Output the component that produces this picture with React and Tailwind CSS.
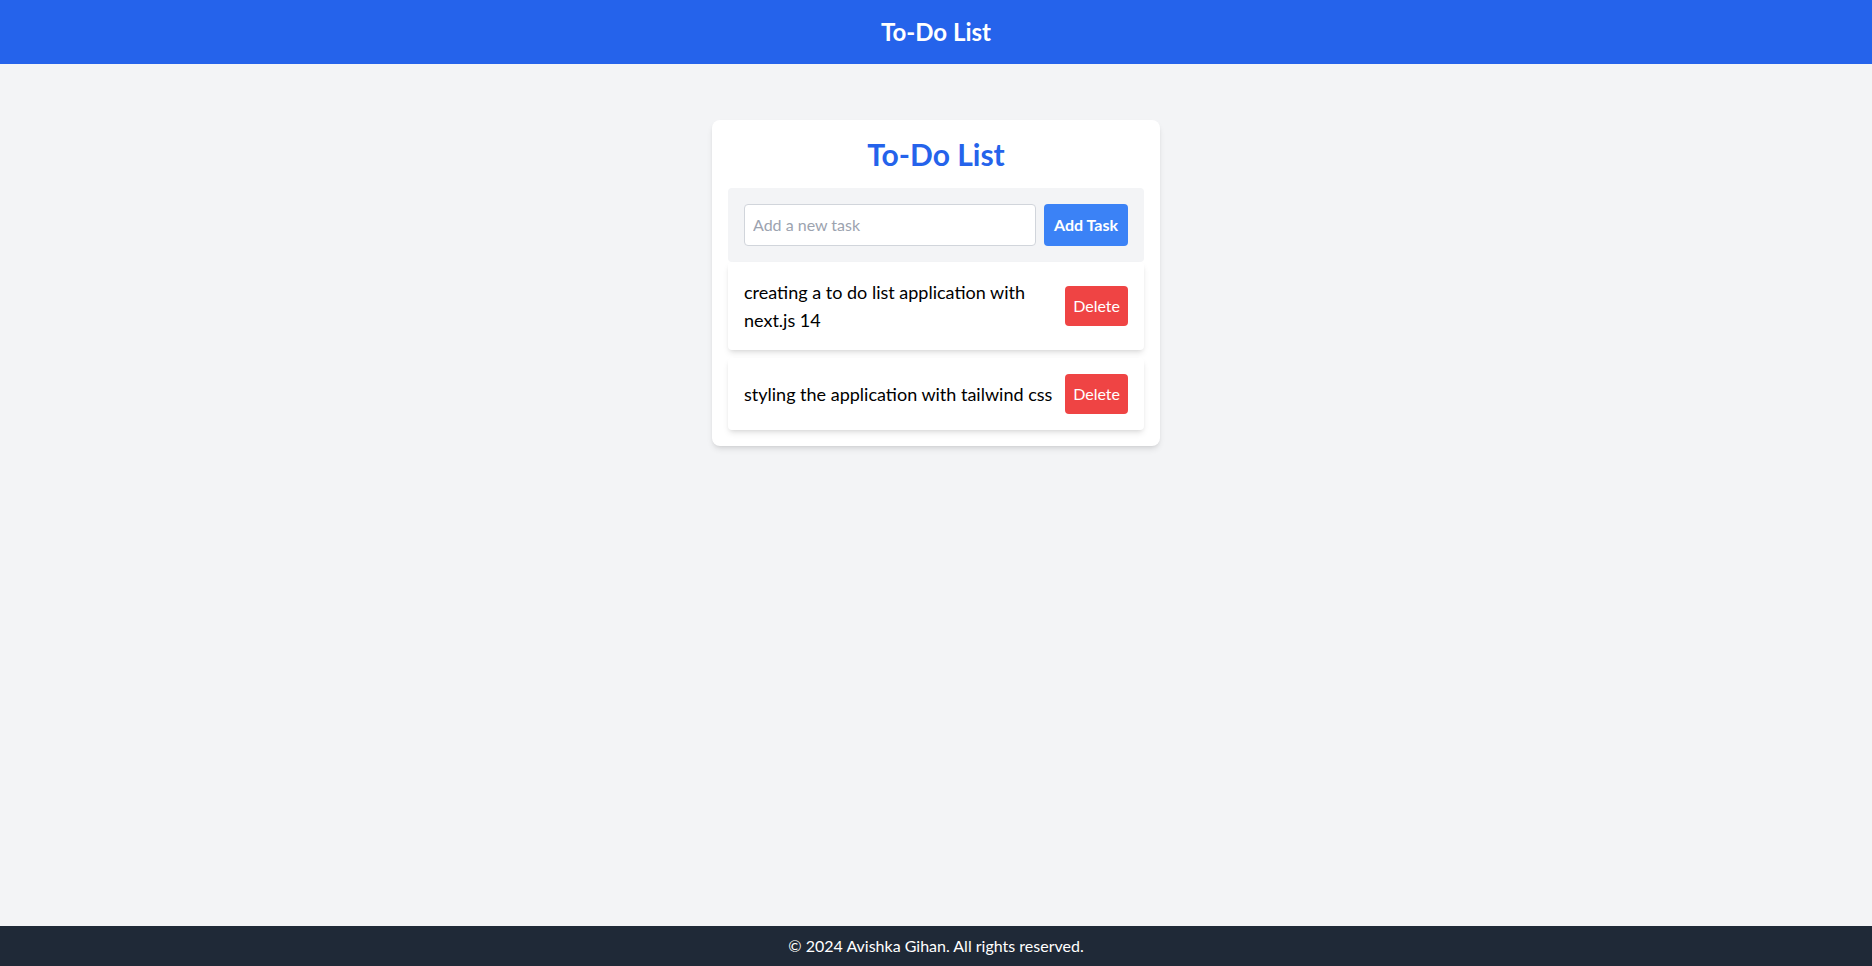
import { useState } from 'react';

export default function App() {
  const [tasks, setTasks] = useState([
    'creating a to do list application with next.js 14',
    'styling the application with tailwind css',
  ]);
  const [text, setText] = useState('');

  const addTask = () => {
    if (!text.trim()) return;
    setTasks([...tasks, text.trim()]);
    setText('');
  };

  return (
    <div className="min-h-screen flex flex-col bg-[#f3f4f6] font-['Segoe_UI',Lato,sans-serif]">
      <header className="bg-[#2563eb] text-white p-4 text-center">
        <h1 className="text-2xl font-bold">To-Do List</h1>
      </header>

      <main className="flex-1 pt-14">
        <div className="max-w-md mx-auto bg-white p-4 rounded-lg shadow-md">
          <h2 className="text-3xl font-bold text-center text-[#2563eb] mb-4">To-Do List</h2>

          <div className="flex gap-2 bg-[#f3f4f6] p-4 rounded">
            <input
              value={text}
              onChange={(e) => setText(e.target.value)}
              placeholder="Add a new task"
              className="flex-1 min-w-0 border border-[#d1d5db] rounded px-2 py-2 text-base bg-white placeholder:text-[#9ca3af] outline-none"
            />
            <button onClick={addTask} className="bg-[#3b82f6] text-white font-bold px-2.5 rounded">
              Add Task
            </button>
          </div>

          <ul className="flex flex-col gap-2">
            {tasks.map((t, i) => (
              <li key={i} className="flex items-center justify-between gap-3 bg-white p-4 rounded shadow-md">
                <span className="text-lg text-black">{t}</span>
                <button
                  onClick={() => setTasks(tasks.filter((_, j) => j !== i))}
                  className="shrink-0 bg-[#ef4444] text-white px-2 py-2 rounded"
                >
                  Delete
                </button>
              </li>
            ))}
          </ul>
        </div>
      </main>

      <footer className="bg-[#1f2937] text-white text-center p-2">
        © 2024 Avishka Gihan. All rights reserved.
      </footer>
    </div>
  );
}
